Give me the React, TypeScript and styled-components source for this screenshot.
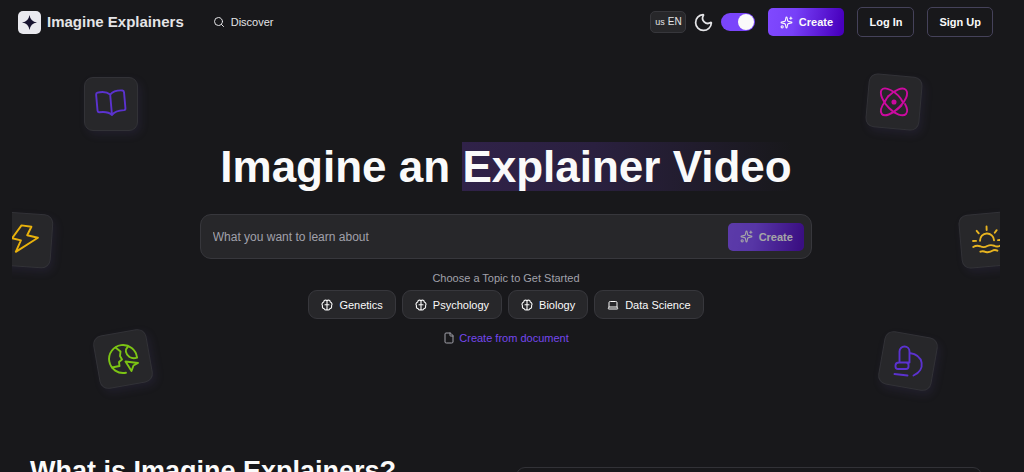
import React from 'react';
import styled, { createGlobalStyle, css } from 'styled-components';
import { File, Laptop, Moon, Search, Sparkles } from 'lucide-react';

const GlobalStyle = createGlobalStyle`
  *, *::before, *::after { box-sizing: border-box; }
  body {
    margin: 0;
    background: #18181b;
    color: #fafafa;
    font-family: 'Liberation Sans', Arial, sans-serif;
    font-size: 11px;
    line-height: 16px;
  }
  button, input { font: inherit; color: inherit; }
`;

const Page = styled.div`
  height: 100vh;
  overflow: hidden;
  padding: 0 24px 0 12px;
`;

const Header = styled.header`
  display: flex;
  align-items: center;
  height: 44px;
  padding: 0 7px 0 6px;
`;

const Brand = styled.a`
  display: flex;
  align-items: center;
  gap: 6px;
  color: #e4e4e7;
  font-size: 15px;
  font-weight: 700;
  text-decoration: none;
`;

const LogoTile = styled.span`
  display: grid;
  place-items: center;
  width: 23px;
  height: 23px;
  border-radius: 5px;
  background: #e9e9ef;
`;

const NavLink = styled.a`
  display: flex;
  align-items: center;
  gap: 6px;
  margin-left: 29px;
  color: #e4e4e7;
  text-decoration: none;
`;

const Actions = styled.div`
  display: flex;
  align-items: center;
  margin-left: auto;
  gap: 13px;
`;

const Preferences = styled.div`
  display: flex;
  align-items: center;
  gap: 7px;
`;

const Language = styled.button`
  display: flex;
  align-items: center;
  justify-content: center;
  gap: 3px;
  width: 36px;
  height: 22px;
  padding: 0;
  border: 1px solid #37373c;
  border-radius: 5px;
  background: #27272a;
  color: #e4e4e7;
  font-size: 10px;

  small { font-size: 9px; }
`;

const Toggle = styled.input`
  appearance: none;
  display: flex;
  align-items: center;
  justify-content: flex-end;
  width: 34px;
  height: 18px;
  margin: 0;
  padding: 0 1px;
  border-radius: 9px;
  background: #7a45fb;

  &::before {
    content: '';
    width: 16px;
    height: 16px;
    border-radius: 50%;
    background: #fafafa;
  }
`;

const buttonBase = css`
  display: flex;
  align-items: center;
  justify-content: center;
  border-radius: 5px;
  font-weight: 700;
`;

const CreateButton = styled.button`
  ${buttonBase}
  gap: 6px;
  width: 76px;
  height: 28px;
  padding: 0;
  border: 0;
  background: linear-gradient(100deg, #8049ff 0%, #7740f8 35%, #4800bd 95%);

  &:disabled { opacity: 0.6; }
`;

const OutlineButton = styled.button`
  ${buttonBase}
  height: 30px;
  padding: 0 11px;
  border: 1px solid #45425a;
  background: transparent;
`;

const Hero = styled.main`
  position: relative;
  display: flex;
  flex-direction: column;
  align-items: center;
  height: 411px;
  padding-top: 98px;
  overflow: hidden;
`;

type Place = { $x: string; $y: number; $tilt: number; $color: string };

const FloatingTile = styled.div<Place>`
  position: absolute;
  ${(p) => p.$x};
  top: ${(p) => p.$y}px;
  display: grid;
  place-items: center;
  width: 54px;
  height: 54px;
  border: 1px solid #323237;
  border-radius: 9px;
  background: #27272a;
  box-shadow: 3px 4px 9px rgba(80, 70, 130, 0.16);
  color: ${(p) => p.$color};
  transform: rotate(${(p) => p.$tilt}deg);
`;

const Title = styled.h1`
  margin: 0;
  font-size: 44px;
  line-height: 50px;
  font-weight: 700;
  white-space: nowrap;
`;

const Highlight = styled.span`
  background: linear-gradient(90deg, #302249 0%, #2a203f 40%, #18181b 100%);
`;

const Prompt = styled.form`
  display: flex;
  align-items: center;
  width: 62%;
  height: 45px;
  margin-top: 22px;
  padding: 0 7px 0 12px;
  border: 1px solid #37373c;
  border-radius: 11px;
  background: #27272a;
`;

const PromptInput = styled.input`
  flex: 1;
  min-width: 0;
  padding: 0;
  border: 0;
  outline: 0;
  background: transparent;
  font-size: 12px;

  &::placeholder { color: #a1a1aa; opacity: 1; }
`;

const Hint = styled.p`
  margin: 11px 0 4px;
  color: #a1a1aa;
`;

const Topics = styled.div`
  display: flex;
  gap: 6px;
`;

const Topic = styled.button`
  display: flex;
  align-items: center;
  gap: 6px;
  height: 29px;
  padding: 0 12px;
  border: 1px solid #37373c;
  border-radius: 9px;
  background: #27272a;
`;

const DocumentLink = styled.a`
  display: flex;
  align-items: center;
  gap: 4px;
  margin-top: 11px;
  color: #7547ee;
  text-decoration: none;

  svg { color: #a1a1aa; }
`;

const About = styled.section`
  display: flex;
  align-items: flex-start;
  padding: 0 18px;
`;

const AboutTitle = styled.h2`
  flex: 1;
  margin: 0;
  font-size: 27px;
  line-height: 32px;
`;

const AboutCard = styled.div`
  width: 49%;
  height: 240px;
  margin-top: 12px;
  border: 1px solid #323237;
  border-radius: 9px;
`;

const Drawing = ({ turn = 0, children }: { turn?: number; children: React.ReactNode }) => (
  <svg
    width="34"
    height="34"
    viewBox="0 0 34 34"
    fill="none"
    stroke="currentColor"
    strokeWidth="1.9"
    strokeLinecap="round"
    strokeLinejoin="round"
    aria-hidden="true"
  >
    <g transform={`rotate(${turn} 17 17)`}>{children}</g>
  </svg>
);

const BookIcon = () => (
  <Drawing turn={-5}>
    <path d="M17 7.500C14 4.500 8 4 4.500 4.500Q3 4.800 3 6.500V22.500Q3 24.200 4.500 24.200C8.500 24 14 24.500 17 28C20 24.500 25.500 24 29.500 24.200Q31 24.200 31 22.500V6.500Q31 4.800 29.500 4.500C26 4 20 4.500 17 7.500V28" />
  </Drawing>
);

const AtomIcon = () => (
  <Drawing turn={-5}>
    <path d="M11 11.500C18 4.500 26 1.500 29 5C32 8.500 28.500 16.500 22 22.500C15 29.500 7.500 32 4.800 29C2.800 26.500 4 22 8 16.500" />
    <path d="M26 17.500C23.500 12 18.500 7.500 13.500 5C9.500 3 6 3 4.500 5C2.500 8.500 5.500 16.500 12 23C18 29.500 26 32 29 29C31 26.500 30 22.500 28 19M8 16.500C9 14.500 10 12.800 11 11.500M20 24.500L24.500 20.500" />
    <circle cx="17" cy="17" r="1.600" fill="currentColor" />
  </Drawing>
);

const BoltIcon = () => (
  <Drawing turn={4}>
    <path d="M11.500 3H21.500L18.500 12L29.500 13L9.500 30L13 18L4 17Z" />
  </Drawing>
);

const SunIcon = () => (
  <Drawing turn={3}>
    <path d="M10 17.500A7 7 0 0 1 24 17.500M17 3.500V7M7 7.500L9 10M27 7.500L25 10M3 17.500H6M28 17.500H31" />
    <path d="M3 23.500Q6.500 21.500 10 23Q13.500 25 17 23Q20.500 21.500 24 23Q27.500 25 31 22.500M10 28.500Q12.500 27.500 15.500 29Q19 30 23 27.500Q25 27 27 28" />
  </Drawing>
);

const GlobeIcon = () => (
  <Drawing turn={10}>
    <path d="M20 30.700A14 14 0 1 1 31 15.500" />
    <path d="M9.500 5.500L14.500 9.500L14 14L16 17.500L13 20L13.500 24L6 25.500M22 4.500C18.500 8 19.500 12 23.500 15C26 16.500 29 16.500 31 15.500M19.500 19.500L32 21L27.500 23.500L25.500 29Z" />
  </Drawing>
);

const MicroscopeIcon = () => (
  <Drawing turn={-10}>
    <path d="M8.500 18.500V7.500A5 5 0 0 1 18.500 7.500V18.500M8 18.500H15Q17.500 18.500 17.500 21V22.500Q17.500 25 15 25H7Q4.500 25 4.500 22.500V21.500Q4.500 18.500 8 18.500M15 18.500H18.500M18.500 9C33 11 35 26 22.500 31.500M3.500 30L16.500 31.500" />
  </Drawing>
);

const BrainIcon = () => (
  <svg
    width="12"
    height="12"
    viewBox="0 0 24 24"
    fill="none"
    stroke="currentColor"
    strokeWidth="2.200"
    strokeLinecap="round"
    strokeLinejoin="round"
    aria-hidden="true"
  >
    <path d="M12 2.500V21.500M12 3.500C9 1 5.500 3 5.500 6C2 7.500 1 11 3 13.500C2 17 4 19.500 6.500 19.500C8 23 11.500 22.500 12 20.500M12 3.500C15 1 18.500 3 18.500 6C22 7.500 23 11 21 13.500C22 17 20 19.500 17.500 19.500C16 23 12.500 22.500 12 20.500M8 11.500H16" />
  </svg>
);

const tiles = [
  { x: 'left: 72px', y: 33, tilt: 0, color: '#5b32cf', icon: <BookIcon /> },
  { x: 'right: 79px', y: 31, tilt: 5, color: '#cc0aa0', icon: <AtomIcon /> },
  { x: 'left: -14px', y: 169, tilt: 4, color: '#e8b10c', icon: <BoltIcon /> },
  { x: 'right: -14px', y: 169, tilt: -5, color: '#e8b420', icon: <SunIcon /> },
  { x: 'left: 84px', y: 288, tilt: -10, color: '#7cc414', icon: <GlobeIcon /> },
  { x: 'right: 65px', y: 290, tilt: 10, color: '#5b32cf', icon: <MicroscopeIcon /> },
];

const topics = [
  { label: 'Genetics', icon: <BrainIcon /> },
  { label: 'Psychology', icon: <BrainIcon /> },
  { label: 'Biology', icon: <BrainIcon /> },
  { label: 'Data Science', icon: <Laptop size={12} /> },
];

export default function App() {
  return (
    <>
      <GlobalStyle />
      <Page>
        <Header>
          <Brand href="#">
            <LogoTile>
              <svg width="15" height="15" viewBox="0 0 16 16" fill="#17132f" aria-hidden="true">
                <path d="M8 0Q9 7 16 8Q9 9 8 16Q7 9 0 8Q7 7 8 0Z" />
              </svg>
            </LogoTile>
            Imagine Explainers
          </Brand>
          <NavLink href="#discover">
            <Search size={12} />
            Discover
          </NavLink>
          <Actions>
            <Preferences>
              <Language type="button">
                <small>us</small>EN
              </Language>
              <Moon size={21} strokeWidth={2} color="#e4e4e7" />
              <Toggle type="checkbox" defaultChecked aria-label="Dark mode" />
            </Preferences>
            <CreateButton type="button">
              <Sparkles size={13} />
              Create
            </CreateButton>
            <OutlineButton type="button">Log In</OutlineButton>
            <OutlineButton type="button">Sign Up</OutlineButton>
          </Actions>
        </Header>
        <Hero>
          {tiles.map((t) => (
            <FloatingTile key={t.x} $x={t.x} $y={t.y} $tilt={t.tilt} $color={t.color}>
              {t.icon}
            </FloatingTile>
          ))}
          <Title>
            Imagine an <Highlight>Explainer Video</Highlight>
          </Title>
          <Prompt onSubmit={(e) => e.preventDefault()}>
            <PromptInput
              type="text"
              placeholder="What you want to learn about"
              aria-label="What you want to learn about"
            />
            <CreateButton type="submit" disabled>
              <Sparkles size={13} />
              Create
            </CreateButton>
          </Prompt>
          <Hint>Choose a Topic to Get Started</Hint>
          <Topics>
            {topics.map(({ label, icon }) => (
              <Topic key={label} type="button">
                {icon}
                {label}
              </Topic>
            ))}
          </Topics>
          <DocumentLink href="#document">
            <File size={12} />
            Create from document
          </DocumentLink>
        </Hero>
        <About>
          <AboutTitle>What is Imagine Explainers?</AboutTitle>
          <AboutCard />
        </About>
      </Page>
    </>
  );
}
